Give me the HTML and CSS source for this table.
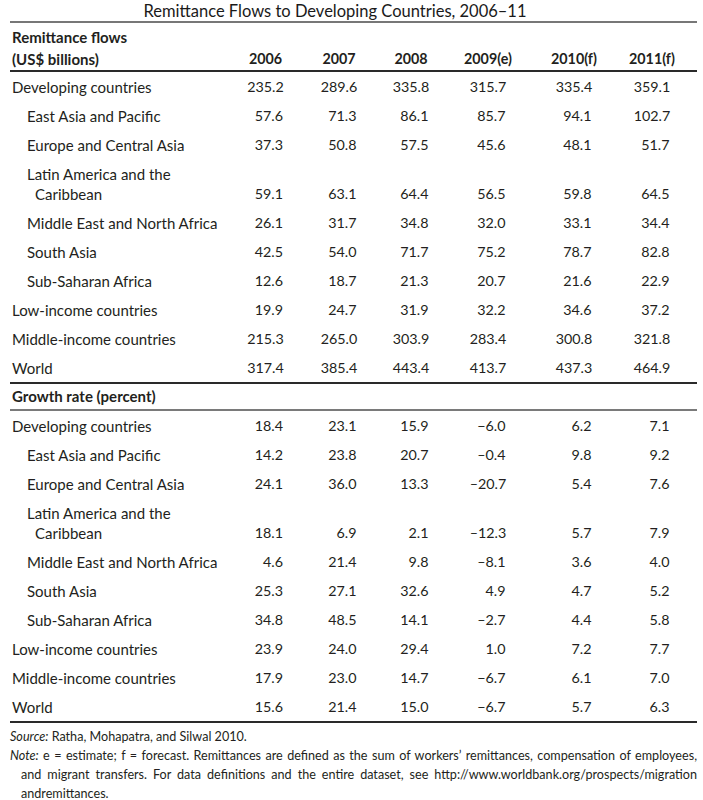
FILE: index.html
```html
<!DOCTYPE html>
<html lang="en">
<head>
<meta charset="utf-8">
<title>Remittance Flows to Developing Countries, 2006–11</title>
<link rel="stylesheet" href="styles.css">
</head>
<body>
<div class="page">
  <h1 class="title">Remittance Flows to Developing Countries, 2006–11</h1>
  <table class="data">
    <colgroup>
      <col class="c-label"><col class="c-2006"><col class="c-2007"><col class="c-2008"><col class="c-2009"><col class="c-2010"><col class="c-2011">
    </colgroup>
    <thead>
      <tr class="head rule-dark">
        <th class="label">Remittance flows<br>(US$ billions)</th>
        <th>2006</th><th>2007</th><th>2008</th><th>2009(e)</th><th>2010(f)</th><th class="last">2011(f)</th>
      </tr>
    </thead>
    <tbody>
      <tr><td class="label">Developing countries</td><td><span class="n">235.2</span></td><td><span class="n">289.6</span></td><td><span class="n">335.8</span></td><td><span class="n">315.7</span></td><td><span class="n">335.4</span></td><td class="last"><span class="n">359.1</span></td></tr>
      <tr><td class="label sub">East Asia and Pacific</td><td><span class="n">57.6</span></td><td><span class="n">71.3</span></td><td><span class="n">86.1</span></td><td><span class="n">85.7</span></td><td><span class="n">94.1</span></td><td class="last"><span class="n">102.7</span></td></tr>
      <tr><td class="label sub">Europe and Central Asia</td><td><span class="n">37.3</span></td><td><span class="n">50.8</span></td><td><span class="n">57.5</span></td><td><span class="n">45.6</span></td><td><span class="n">48.1</span></td><td class="last"><span class="n">51.7</span></td></tr>
      <tr><td class="label sub wrap">Latin America and the<br>Caribbean</td><td><span class="n">59.1</span></td><td><span class="n">63.1</span></td><td><span class="n">64.4</span></td><td><span class="n">56.5</span></td><td><span class="n">59.8</span></td><td class="last"><span class="n">64.5</span></td></tr>
      <tr><td class="label sub">Middle East and North Africa</td><td><span class="n">26.1</span></td><td><span class="n">31.7</span></td><td><span class="n">34.8</span></td><td><span class="n">32.0</span></td><td><span class="n">33.1</span></td><td class="last"><span class="n">34.4</span></td></tr>
      <tr><td class="label sub">South Asia</td><td><span class="n">42.5</span></td><td><span class="n">54.0</span></td><td><span class="n">71.7</span></td><td><span class="n">75.2</span></td><td><span class="n">78.7</span></td><td class="last"><span class="n">82.8</span></td></tr>
      <tr><td class="label sub">Sub-Saharan Africa</td><td><span class="n">12.6</span></td><td><span class="n">18.7</span></td><td><span class="n">21.3</span></td><td><span class="n">20.7</span></td><td><span class="n">21.6</span></td><td class="last"><span class="n">22.9</span></td></tr>
      <tr><td class="label">Low-income countries</td><td><span class="n">19.9</span></td><td><span class="n">24.7</span></td><td><span class="n">31.9</span></td><td><span class="n">32.2</span></td><td><span class="n">34.6</span></td><td class="last"><span class="n">37.2</span></td></tr>
      <tr><td class="label">Middle-income countries</td><td><span class="n">215.3</span></td><td><span class="n">265.0</span></td><td><span class="n">303.9</span></td><td><span class="n">283.4</span></td><td><span class="n">300.8</span></td><td class="last"><span class="n">321.8</span></td></tr>
      <tr class="rule-dark"><td class="label">World</td><td><span class="n">317.4</span></td><td><span class="n">385.4</span></td><td><span class="n">443.4</span></td><td><span class="n">413.7</span></td><td><span class="n">437.3</span></td><td class="last"><span class="n">464.9</span></td></tr>
    </tbody>
    <tbody>
      <tr class="section rule-gray"><th class="label" colspan="7">Growth rate (percent)</th></tr>
    </tbody>
    <tbody>
      <tr><td class="label">Developing countries</td><td><span class="n">18.4</span></td><td><span class="n">23.1</span></td><td><span class="n">15.9</span></td><td><span class="n">−6.0</span></td><td><span class="n">6.2</span></td><td class="last"><span class="n">7.1</span></td></tr>
      <tr><td class="label sub">East Asia and Pacific</td><td><span class="n">14.2</span></td><td><span class="n">23.8</span></td><td><span class="n">20.7</span></td><td><span class="n">–0.4</span></td><td><span class="n">9.8</span></td><td class="last"><span class="n">9.2</span></td></tr>
      <tr><td class="label sub">Europe and Central Asia</td><td><span class="n">24.1</span></td><td><span class="n">36.0</span></td><td><span class="n">13.3</span></td><td><span class="n">–20.7</span></td><td><span class="n">5.4</span></td><td class="last"><span class="n">7.6</span></td></tr>
      <tr><td class="label sub wrap">Latin America and the<br>Caribbean</td><td><span class="n">18.1</span></td><td><span class="n">6.9</span></td><td><span class="n">2.1</span></td><td><span class="n">–12.3</span></td><td><span class="n">5.7</span></td><td class="last"><span class="n">7.9</span></td></tr>
      <tr><td class="label sub">Middle East and North Africa</td><td><span class="n">4.6</span></td><td><span class="n">21.4</span></td><td><span class="n">9.8</span></td><td><span class="n">–8.1</span></td><td><span class="n">3.6</span></td><td class="last"><span class="n">4.0</span></td></tr>
      <tr><td class="label sub">South Asia</td><td><span class="n">25.3</span></td><td><span class="n">27.1</span></td><td><span class="n">32.6</span></td><td><span class="n">4.9</span></td><td><span class="n">4.7</span></td><td class="last"><span class="n">5.2</span></td></tr>
      <tr><td class="label sub">Sub-Saharan Africa</td><td><span class="n">34.8</span></td><td><span class="n">48.5</span></td><td><span class="n">14.1</span></td><td><span class="n">–2.7</span></td><td><span class="n">4.4</span></td><td class="last"><span class="n">5.8</span></td></tr>
      <tr><td class="label">Low-income countries</td><td><span class="n">23.9</span></td><td><span class="n">24.0</span></td><td><span class="n">29.4</span></td><td><span class="n">1.0</span></td><td><span class="n">7.2</span></td><td class="last"><span class="n">7.7</span></td></tr>
      <tr><td class="label">Middle-income countries</td><td><span class="n">17.9</span></td><td><span class="n">23.0</span></td><td><span class="n">14.7</span></td><td><span class="n">−6.7</span></td><td><span class="n">6.1</span></td><td class="last"><span class="n">7.0</span></td></tr>
      <tr class="rule-dark"><td class="label">World</td><td><span class="n">15.6</span></td><td><span class="n">21.4</span></td><td><span class="n">15.0</span></td><td><span class="n">−6.7</span></td><td><span class="n">5.7</span></td><td class="last"><span class="n">6.3</span></td></tr>
    </tbody>
  </table>
  <div class="notes">
    <p class="line"><em>Source:</em> Ratha, Mohapatra, and Silwal 2010.</p>
    <p class="line just"><em>Note:</em> e = estimate; f = forecast. Remittances are defined as the sum of workers’ remittances, compensation of employees,</p>
    <p class="line just cont">and migrant transfers. For data definitions and the entire dataset, see http://www.worldbank.org/prospects/migration</p>
    <p class="line cont">andremittances.</p>
  </div>
</div>
</body>
</html>
```

FILE: styles.css
```css
* { box-sizing: border-box; }

html, body {
  margin: 0;
  padding: 0;
  background: #ffffff;
}

body {
  font-family: Lato, "Liberation Sans", sans-serif;
  color: #231f20;
}

.page {
  width: 703px;
  padding: 0 6px 0 10px;
}

.title {
  margin: 0;
  padding: 2px 37px 0 0;
  font-size: 16.5px;
  font-weight: 400;
  line-height: 19px;
  text-align: center;
  color: #1a1a1a;
  border-bottom: 2px solid #777777;
}

.data {
  width: 687px;
  table-layout: fixed;
  border-collapse: separate;
  border-spacing: 0;
  font-size: 14.3px;
}

.c-label { width: 220px; }
.c-2006 { width: 71px; }
.c-2007 { width: 76px; }
.c-2008 { width: 68px; }
.c-2009 { width: 86px; }
.c-2010 { width: 86px; }
.c-2011 { width: 80px; }

.data th,
.data td {
  padding: 5px 0 4px 0;
  line-height: 20px;
  text-align: center;
  vertical-align: bottom;
  white-space: nowrap;
}

.data .last { padding-right: 10px; }

.data th { font-weight: 700; }

.data .label {
  text-align: left;
  padding-left: 2px;
  font-size: 15px;
}

.data .label.sub { padding-left: 17px; }

.data .label.wrap {
  padding-left: 25px;
  text-indent: -8px;
}

.head th {
  padding-top: 3px;
  padding-bottom: 0;
  line-height: 22px;
}

.section th {
  padding-top: 2px;
  padding-bottom: 3px;
}

.rule-dark > * { border-bottom: 2px solid #2a2a2a; }
.rule-gray > * { border-bottom: 2px solid #7a7a7a; }

.n {
  display: inline-block;
  min-width: 35px;
  text-align: right;
}

.notes {
  padding-top: 4px;
  font-size: 12.6px;
  line-height: 19px;
}

.notes .line {
  margin: 0;
  white-space: nowrap;
}

.notes .just {
  text-align: justify;
  text-align-last: justify;
  white-space: normal;
}

.notes .cont { padding-left: 11px; }

.notes em { font-style: italic; }
```
